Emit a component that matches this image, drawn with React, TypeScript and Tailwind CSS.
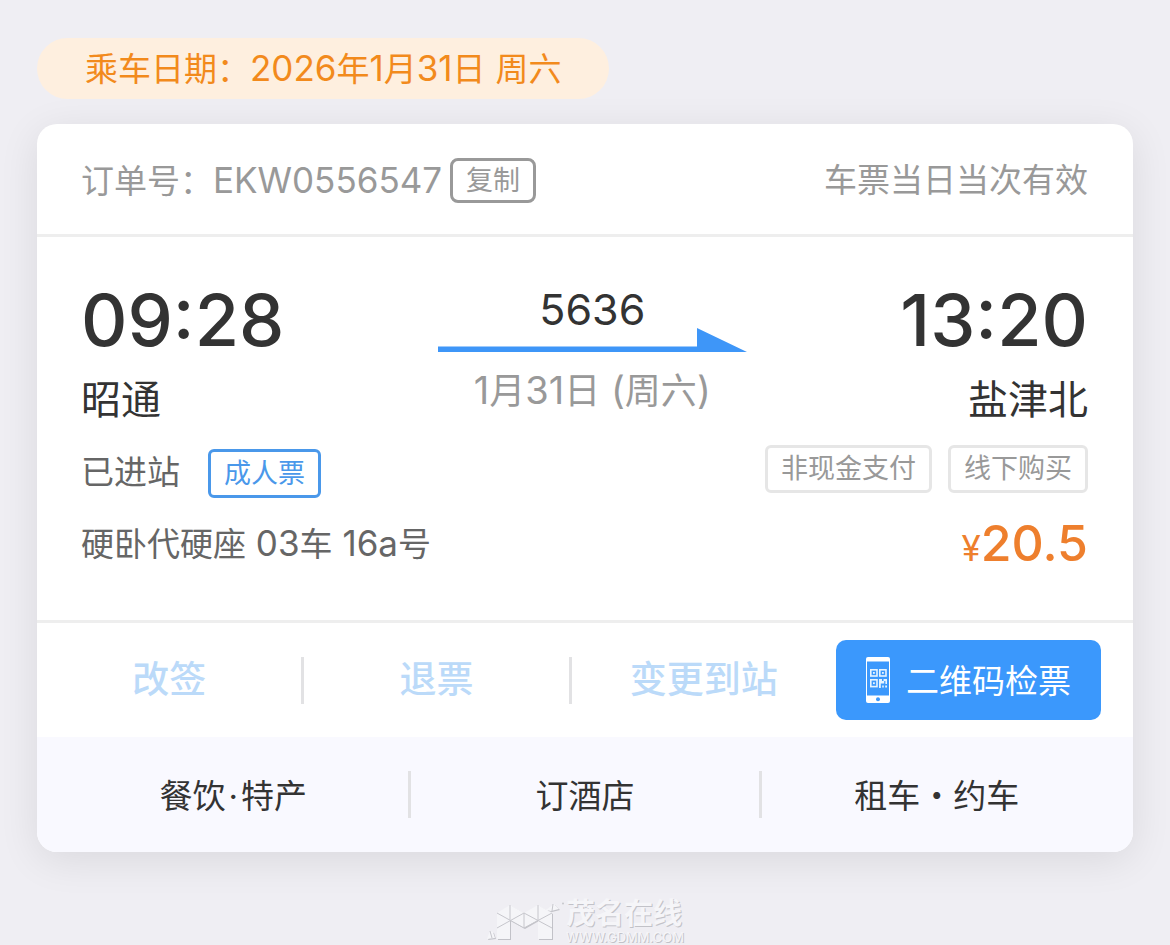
import React from 'react';

interface Ticket {
  travelDate: string;
  orderNo: string;
  trainNo: string;
  day: string;
  from: { time: string; station: string };
  to: { time: string; station: string };
  status: string;
  seat: string;
  price: string;
  tags: string[];
}

const ticket: Ticket = {
  travelDate: '2026年1月31日 周六',
  orderNo: 'EKW0556547',
  trainNo: '5636',
  day: '1月31日 (周六)',
  from: { time: '09:28', station: '昭通' },
  to: { time: '13:20', station: '盐津北' },
  status: '已进站',
  seat: '硬卧代硬座 03车 16a号',
  price: '20.5',
  tags: ['非现金支付', '线下购买'],
};

const actions = ['改签', '退票', '变更到站'];
const services = ['餐饮\u200a·\u200a特产', '订酒店', '租车・约车'];

// 数字和字母比汉字略大一号
const Mixed = ({ text, size = 'text-[35px]' }: { text: string; size?: string }) => (
  <>
    {text.split(/([\x20-\x7e]+)/).map((part, i) =>
      i % 2 ? (
        <span key={i} className={size}>
          {part}
        </span>
      ) : (
        part
      )
    )}
  </>
);

const PhoneQrIcon = () => (
  <svg className="h-[46px] w-6 shrink-0" viewBox="0 0 24 46" aria-hidden="true">
    <rect width="24" height="46" rx="2" fill="#fff" />
    <rect x="1" y="4.5" width="22" height="34" fill="#3b98fc" />
    <circle cx="12" cy="42.3" r="2" fill="#3b98fc" />
    <g fill="none" stroke="#e6f4ff" strokeWidth="1.6">
      <rect x="4.8" y="12.8" width="6.2" height="6.2" />
      <rect x="13.8" y="12.8" width="6.2" height="6.2" />
      <rect x="4.8" y="22.8" width="6.2" height="6.8" />
    </g>
    <g fill="#e6f4ff">
      <rect x="7" y="15" width="1.8" height="1.8" />
      <rect x="16" y="15" width="1.8" height="1.8" />
      <rect x="7" y="25.3" width="1.8" height="1.8" />
      <path d="M13 22h3v2h1.5v-2H21v5h-1.6v-3h-1.2v2.4h-3.4V31H13z" />
      <path d="M16.2 28.6h1.6v1.8h-1.6zM19.2 28.6H21v1.8h-1.8z" />
    </g>
  </svg>
);

const TrainArrow = () => (
  <svg className="h-6 w-[309px]" viewBox="0 0 309 24" aria-hidden="true">
    <path d="M0 18.5H259V0L309 24H0z" fill="#3e96f8" />
  </svg>
);

const WatermarkLogo = () => (
  <svg className="h-10 w-20" viewBox="0 0 80 40" aria-hidden="true">
    <path
      d="M11 11L24 3l14 8 14-8 14 8v26H52V18l-14 8-14-8v19H11zM1 37l3-8 3 1 2 6zM60 8l8-6 5 5-8 2z"
      transform="translate(1 1)"
      fill="#c2c2c8"
    />
    <path
      d="M11 11L24 3l14 8 14-8 14 8v26H52V18l-14 8-14-8v19H11zM1 37l3-8 3 1 2 6zM60 8l8-6 5 5-8 2z"
      fill="#f5f5f8"
    />
    <path
      d="M11 11l27 15V11L11 26M24 3v15M52 3v15M38 26l28-15M38 11l28 15M4 29l2 7M67 2l-1 7"
      fill="none"
      stroke="#c6c6cc"
      strokeWidth="1"
    />
    <circle cx="77" cy="1.5" r="1" fill="#c6c6cc" />
  </svg>
);

const Divider = () => <span className="h-[47px] w-[3px] shrink-0 bg-[#e2e2e4]" />;

const App: React.FC = () => (
  <div className="flex min-h-screen flex-col bg-[#efeef3] px-[37px] pt-[38px] font-['Inter','Noto_Sans_CJK_SC',sans-serif] text-[33px] text-[#333]">
    <div className="relative h-[61px] self-start rounded-full bg-[#feefdf] px-12 leading-[61px] text-[#f28a1c]">
      乘车日期：
      <Mixed text={ticket.travelDate} />
    </div>

    <main className="mt-[25px] overflow-hidden rounded-[20px] bg-white shadow-[0_8px_40px_rgba(0,0,0,0.09)]">
      {/* 订单号 */}
      <header className="flex h-[113px] items-center justify-between border-b-[3px] border-[#eee] pt-[3px] pr-[45px] pl-11 text-[#999]">
        <div className="flex items-center gap-2">
          <span>
            订单号：
            <Mixed text={ticket.orderNo} />
          </span>
          <button className="h-[45px] rounded-lg border-[3px] border-[#999] px-[13px] text-[27px] leading-[39px]">
            复制
          </button>
        </div>
        <span>车票当日当次有效</span>
      </header>

      {/* 行程 */}
      <section className="border-b-[3px] border-[#eee] pt-[43px] pr-[45px] pb-[45px] pl-11">
        <div className="flex items-start justify-between">
          <div>
            <div className="text-[72px] leading-[80px] font-medium">{ticket.from.time}</div>
            <div className="mt-3 text-[40px] leading-[56px]">{ticket.from.station}</div>
          </div>
          <div className="flex flex-col items-center pt-1">
            <div className="text-[43px] leading-[50px]">{ticket.trainNo}</div>
            <div className="-mt-[6px]">
              <TrainArrow />
            </div>
            <div className="mt-3 text-[36px] leading-[52px] text-[#999]">
              <Mixed text={ticket.day} size="text-[38px]" />
            </div>
          </div>
          <div className="text-right">
            <div className="text-[72px] leading-[80px] font-medium">{ticket.to.time}</div>
            <div className="mt-3 text-[40px] leading-[56px]">{ticket.to.station}</div>
          </div>
        </div>

        <div className="mt-[17px] flex h-14 items-start justify-between">
          <div className="flex h-14 items-center gap-[28px]">
            <span className="text-[#666]">{ticket.status}</span>
            <span className="rounded-md border-[3px] border-[#4a98ea] px-[13px] text-[27px] leading-[43px] text-[#4a98ea]">
              成人票
            </span>
          </div>
          <div className="flex gap-4">
            {ticket.tags.map((tag) => (
              <span
                key={tag}
                className="rounded-md border-[3px] border-[#e6e6e6] px-[13px] text-[27px] leading-[42px] text-[#999]"
              >
                {tag}
              </span>
            ))}
          </div>
        </div>

        <div className="mt-[14px] flex h-[60px] items-center justify-between">
          <span className="pb-1 text-[#666]">
            <Mixed text={ticket.seat} />
          </span>
          <span className="text-[50px] leading-[60px] font-medium text-[#ee7f2d]">
            <span className="text-[35px] font-normal">¥</span>
            {ticket.price}
          </span>
        </div>
      </section>

      {/* 操作按钮 */}
      <div className="flex h-[114px] items-center pr-8">
        {actions.map((label, i) => (
          <React.Fragment key={label}>
            {i > 0 && <Divider />}
            <button className="flex-1 text-[37px] leading-[54px] font-medium text-[#bbdaf9]" disabled>
              {label}
            </button>
          </React.Fragment>
        ))}
        <button className="flex h-20 w-[265px] items-center justify-center gap-4 rounded-[10px] bg-[#3b98fc] text-white">
          <PhoneQrIcon />
          <span className="pt-1">二维码检票</span>
        </button>
      </div>

      {/* 出行服务 */}
      <nav className="flex h-[115px] items-center bg-[#f9f9ff] px-[22px]">
        {services.map((label, i) => (
          <React.Fragment key={label}>
            {i > 0 && <Divider />}
            <a href="#" className="flex-1 pt-1 text-center">
              {label}
            </a>
          </React.Fragment>
        ))}
      </nav>
    </main>

    <footer className="mt-auto flex items-end justify-center pt-6 text-[#f5f5f8] [text-shadow:1px_1px_0_#c2c2c8]">
      <div className="pb-[3px]">
        <WatermarkLogo />
      </div>
      <div>
        <div className="text-[29px] leading-[30px] font-bold">茂名在线</div>
        <div className="text-[13px] leading-[16px]">WWW.GDMM.COM</div>
      </div>
    </footer>
  </div>
);

export default App;
